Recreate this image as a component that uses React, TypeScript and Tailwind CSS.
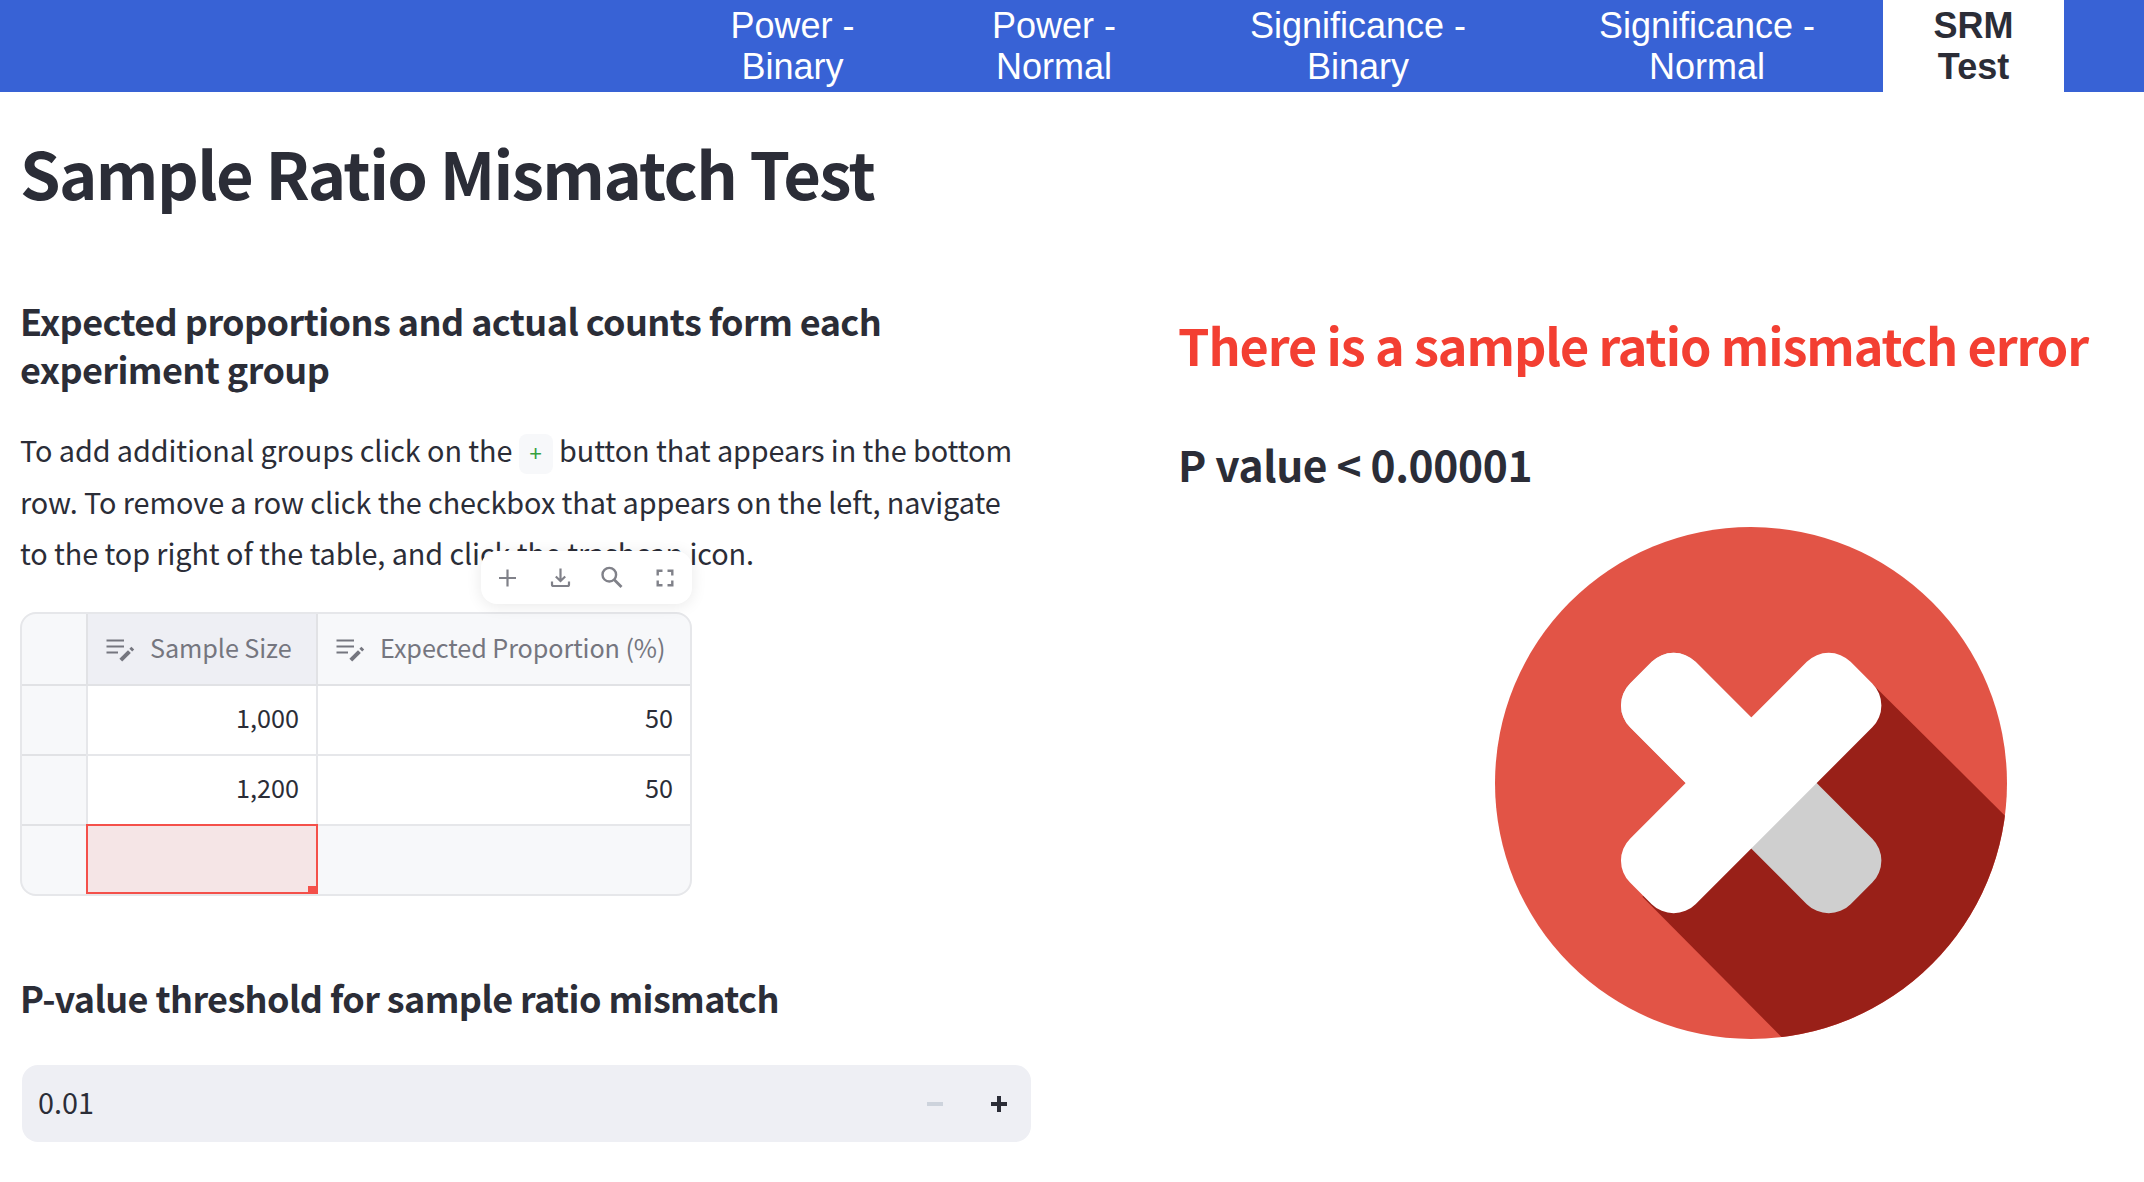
import React from "react";

const tabs = [
  { top: "Power -", bottom: "Binary", width: "w-[261px]" },
  { top: "Power -", bottom: "Normal", width: "w-[262px]" },
  { top: "Significance -", bottom: "Binary", width: "w-[346px]" },
  { top: "Significance -", bottom: "Normal", width: "w-[352px]" },
];

const rows = [
  { size: "1,000", proportion: "50" },
  { size: "1,200", proportion: "50" },
];

function NavBar() {
  return (
    <nav className="flex h-[92px] justify-end overflow-hidden bg-[#3862d5] pr-20 text-center font-['Liberation_Sans',sans-serif] text-[36px] leading-[41px] text-white">
      {tabs.map((tab) => (
        <div key={tab.top + tab.bottom} className={`${tab.width} pt-[5px]`}>
          {tab.top}
          <br />
          {tab.bottom}
        </div>
      ))}
      <div className="w-[181px] bg-white pt-[5px] font-bold text-[#2b2d37]">
        SRM
        <br />
        Test
      </div>
    </nav>
  );
}

function EditColumnIcon() {
  return (
    <svg className="mt-[3px] ml-[18px] h-[26px] w-[30px] shrink-0" viewBox="0 0 30 26" fill="none" stroke="#75767f">
      <path d="M0.5 3.5H18M0.5 9.5H18M0.5 15.5H12" strokeWidth="2" />
      <path d="M14.8 23.2L23.4 14.6" strokeWidth="4" />
      <path d="M24.8 13.2L26.8 11.2" strokeWidth="4" />
    </svg>
  );
}

function TableToolbar() {
  return (
    <div className="absolute -top-[61px] right-0 flex h-[53px] w-[211px] items-center justify-between rounded-[16px] bg-white pt-px pr-[15px] pl-[14px] shadow-[0_2px_16px_rgba(0,0,0,0.09)]">
      <svg className="size-6" viewBox="0 0 24 24" fill="none" stroke="#808189" strokeWidth="2.2">
        <path d="M12.5 3.5V20.5M4 12H21" />
      </svg>
      <svg className="size-6" viewBox="0 0 24 24" fill="none" stroke="#808189" strokeWidth="2.2">
        <path d="M12.5 2.5V14M7.8 10.5L12.5 15L17.2 10.5" />
        <path d="M4 15.5V18.5Q4 20 5.5 20H19.5Q21 20 21 18.5V15.5" />
      </svg>
      <svg className="size-6" viewBox="0 0 24 24" fill="none" stroke="#808189" strokeWidth="2.4">
        <circle cx="9.3" cy="8.7" r="6.8" />
        <path d="M14 13.6L21.5 21.1" strokeWidth="2.8" />
      </svg>
      <svg className="size-6" viewBox="0 0 24 24" fill="none" stroke="#808189" strokeWidth="2.4">
        <path d="M4.7 9.5V4.7H9.5M14.5 4.7H19.3V9.5M19.3 14.5V19.3H14.5M9.5 19.3H4.7V14.5" />
      </svg>
    </div>
  );
}

function GroupsTable() {
  return (
    <div className="relative mt-[33px] w-[672px]">
      <div className="grid h-[284px] grid-cols-[64px_232px_1fr] grid-rows-[72px_70px_70px_1fr] overflow-hidden rounded-[16px] border-2 border-[#e6e7ea] bg-[#f7f8fa] text-[25.2px] leading-[36px] text-[#2b2d37]">
        <div className="border-b-2 border-[#e1e2e5]" />
        <div className="flex items-center border-x-2 border-b-2 border-[#e1e2e5] bg-[#eeeff4] text-[#75767f]">
          <EditColumnIcon />
          <span className="-mt-[3px] ml-[14px] tracking-[-0.08px]">Sample Size</span>
        </div>
        <div className="flex items-center border-b-2 border-[#e1e2e5] text-[#75767f]">
          <EditColumnIcon />
          <span className="-mt-[3px] ml-[14px] tracking-[-0.08px]">Expected Proportion (%)</span>
        </div>
        {rows.map((row) => (
          <React.Fragment key={row.size}>
            <div className="border-b-2 border-[#e1e2e5]" />
            <div className="flex items-center justify-end border-x-2 border-b-2 border-[#e6e7ea] bg-white pr-[17px] pb-[5px]">
              {row.size}
            </div>
            <div className="flex items-center justify-end border-b-2 border-[#e6e7ea] bg-white pr-[17px] pb-[5px]">
              {row.proportion}
            </div>
          </React.Fragment>
        ))}
        <div />
        <div className="relative -mt-[2px] h-[70px] w-[232px] border-2 border-[#f4504a] bg-[#f5e5e6]">
          <div className="absolute -right-[1px] bottom-0 h-[6px] w-[9px] bg-[#f4504a]" />
        </div>
        <div />
      </div>
      <TableToolbar />
    </div>
  );
}

function ThresholdInput() {
  return (
    <div className="mt-[44px] ml-[2px] flex h-[77px] w-[1009px] items-center justify-between rounded-[16px] bg-[#eeeff4] pr-6 pl-4 text-[28.8px] text-[#2b2d37]">
      <span className="-mt-[2px]">0.01</span>
      <div className="flex gap-12 pt-px">
        <svg className="size-4" viewBox="0 0 16 16" fill="#cdd3dc">
          <rect y="6" width="16" height="4" />
        </svg>
        <svg className="size-4" viewBox="0 0 16 16" fill="#2b2d37">
          <path d="M6 0h4v6h6v4h-6v6h-4v-6h-6v-4h6z" />
        </svg>
      </div>
    </div>
  );
}

function ErrorBadge() {
  return (
    <svg className="mt-[35px] ml-[317px] size-[512px]" viewBox="44 48 1487 1487">
      <defs>
        <clipPath id="disc">
          <circle cx="787.5" cy="791.5" r="743.5" />
        </clipPath>
      </defs>
      <circle cx="787.5" cy="791.5" r="743.5" fill="#e25446" />
      <path d="M1118 482L1723 1083L1274 1930L472 1122Z" fill="#992018" clipPath="url(#disc)" />
      <g transform="translate(788 791.5) rotate(45)">
        <rect x="-453" y="-134.5" width="906" height="269" rx="90" fill="#cfcfcf" />
        <rect x="-453" y="-134.5" width="560" height="269" rx="90" fill="#fff" />
        <rect x="-134.5" y="-453" width="269" height="906" rx="90" fill="#fff" />
      </g>
    </svg>
  );
}

export default function App() {
  return (
    <div className="h-[1182px] w-[2144px] overflow-hidden bg-white font-['Noto_Sans_CJK_SC',sans-serif] text-[#2b2d37]">
      <NavBar />
      <main className="pl-5">
        <h1 className="mt-[38px] text-[65px] leading-[84px] font-semibold tracking-[-1.57px] whitespace-nowrap">
          Sample Ratio Mismatch Test
        </h1>
        <div className="flex">
          <section className="w-[1011px] pt-[82px]">
            <h3 className="text-[36px] leading-[48px] font-semibold tracking-[-0.59px] whitespace-nowrap">
              Expected proportions and actual counts form each
              <br />
              experiment group
            </h3>
            <p className="mt-8 text-[28.8px] leading-[51.5px] tracking-[-0.08px] whitespace-nowrap">
              To add additional groups click on the{" "}
              <code className="inline-flex h-10 w-[34px] items-center justify-center rounded-lg bg-[#f7f8fa] pt-[3px] align-middle font-['Liberation_Mono',monospace] text-[22px] text-[#35a03f]">
                +
              </code>{" "}
              button that appears in the bottom
              <br />
              row. To remove a row click the checkbox that appears on the left, navigate
              <br />
              to the top right of the table, and click the trashcan icon.
            </p>
            <GroupsTable />
            <h3 className="mt-[77px] text-[36px] leading-[48px] font-semibold tracking-[-0.6px] whitespace-nowrap">
              P-value threshold for sample ratio mismatch
            </h3>
            <ThresholdInput />
          </section>
          <section className="ml-[147px] pt-[99px]">
            <h2 className="text-[50.4px] leading-[64px] font-semibold tracking-[-1.1px] whitespace-nowrap text-[#f33f32]">
              There is a sample ratio mismatch error
            </h2>
            <h3 className="mt-[59px] text-[42.5px] leading-[56px] font-semibold tracking-[-0.37px] whitespace-nowrap">
              P value &lt; 0.00001
            </h3>
            <ErrorBadge />
          </section>
        </div>
      </main>
    </div>
  );
}
